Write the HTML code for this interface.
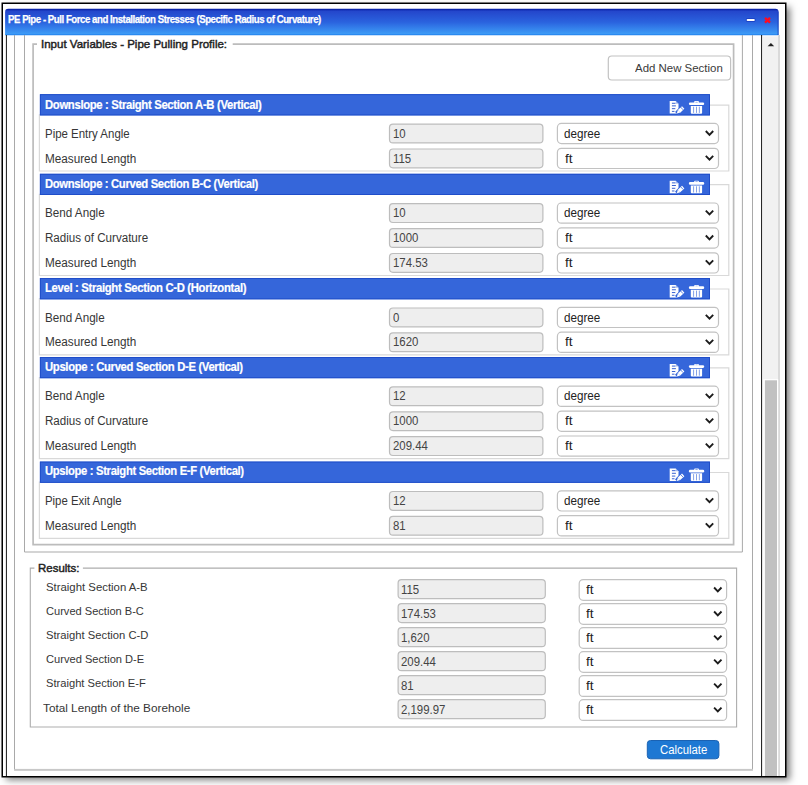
<!DOCTYPE html>
<html><head><meta charset="utf-8"><title>PE Pipe - Pull Force and Installation Stresses</title>
<style>
html,body{margin:0;padding:0;background:#fff;}
body{width:808px;height:785px;position:relative;overflow:hidden;font-family:"Liberation Sans",sans-serif;}
#shadow{position:absolute;left:2px;top:3px;width:784px;height:773px;background:#fff;box-shadow:4px 4px 7px rgba(0,0,0,.5);}
svg{position:absolute;left:0;top:0;}
.t{position:absolute;white-space:nowrap;line-height:20px;height:20px;transform-origin:0 0;font-family:"Liberation Sans",sans-serif;}
</style></head><body>
<div id="shadow"></div>
<svg width="808" height="785" viewBox="0 0 808 785">
<defs><linearGradient id="tg" x1="0" y1="0" x2="0" y2="1"><stop offset="0" stop-color="#0b22a6"/><stop offset="0.035" stop-color="#0d27ac"/><stop offset="0.085" stop-color="#2446cb"/><stop offset="0.5" stop-color="#2a62de"/><stop offset="0.95" stop-color="#3d9bf6"/><stop offset="0.975" stop-color="#2a8af0"/><stop offset="1" stop-color="#2283ee"/></linearGradient><clipPath id="inner"><rect x="3" y="4" width="782" height="772"/></clipPath></defs>
<g clip-path="url(#inner)">
<path d="M5.1,35.15 V12.0 Q5.1,8.8 8.3,8.8 H775.4 Q778.6,8.8 778.6,12.0 V35.15 Z" fill="url(#tg)"/>
<line x1="778.1" y1="11.5" x2="778.1" y2="35" stroke="#1538b8" stroke-width="1" opacity=".75"/>
<line x1="747.6" y1="20" x2="753.8" y2="20" stroke="#1c43c6" stroke-width="3.8" stroke-linecap="round"/>
<line x1="747.6" y1="20" x2="753.8" y2="20" stroke="#fff" stroke-width="2" stroke-linecap="round"/>
<path d="M765,17.9 L770,22.7 M770,17.9 L765,22.7" stroke="#ff0a20" stroke-width="2.3" fill="none"/>
<rect x="5.9" y="35" width="1.0" height="741" fill="#181818"/>
<rect x="761.1" y="35" width="1.0" height="741" fill="#111"/>
<rect x="763" y="36.3" width="15.2" height="739.7" fill="#f1f1f1"/>
<rect x="778.1" y="35" width="1.8" height="741" fill="#d6d6d6"/>
<path d="M767.6,46.3 L774.2,46.3 L770.9,43 Z" fill="#222"/>
<rect x="763.2" y="379.2" width="15" height="396.8" fill="#fff"/>
<rect x="764.9" y="380.3" width="12.1" height="395.7" fill="#c1c1c1"/>
<path d="M14.5,35 L14.5,769.8 L752.5,769.8 L752.5,35" fill="none" stroke="#a9a9a9" stroke-width="1.0"/>
<rect x="14" y="768.9" width="739" height="1.8" fill="#c8c8c8"/>
<path d="M24.5,35 L24.5,552 L742.4,552 L742.4,35" fill="none" stroke="#a9a9a9" stroke-width="1.0"/>
<path d="M37,44.2 L33.1,44.2 L33.1,544.6 L733.6,544.6 L733.6,44.2 L232.7,44.2" fill="none" stroke="#bcbcbc" stroke-width="1.7"/>
<path d="M34.4,568.1 L30.3,568.1 L30.3,727 L736.6,727 L736.6,568.1 L82.9,568.1" fill="none" stroke="#adadad" stroke-width="1.1"/>
<rect x="608.3" y="56.0" width="122.3" height="24" rx="3.5" fill="#fff" stroke="#c2c2c2" stroke-width="1.2"/>
<path d="M709,105.10000000000001 L728.8,105.10000000000001 L728.8,171.0 L39.4,171.0 L39.4,114.2" fill="none" stroke="#d9d9d9" stroke-width="1.2"/>
<rect x="39.9" y="94.20" width="670.1" height="21.2" fill="#3566da"/>
<rect x="40.35" y="94.65" width="669.2" height="20.3" fill="none" stroke="#1d4bc7" stroke-width="0.9"/>
<g transform="translate(669.7,101.10000000000001)"><path d="M0,0 H6.1 L8.8,2.7 V12.5 H0 Z" fill="#fff"/><path d="M6.1,0 V2.7 H8.8 Z" fill="#3566da" opacity=".45"/><g fill="#2f5bd0"><rect x="2.2" y="1.7" width="3.6" height=".95"/><rect x="2.2" y="4.3" width="4.0" height=".95"/><rect x="2.2" y="7.1" width="3.4" height=".95"/><rect x="2.2" y="9.8" width="2.6" height=".95"/></g><path d="M13.7,6.2 L9.0,10.6 L7.2,12.6" stroke="#3566da" stroke-width="5.0" fill="none"/><path d="M13.5,6.4 L9.3,10.3" stroke="#fff" stroke-width="3.5" fill="none"/><path d="M10.6,11.5 L8.1,8.9 L7.2,12.5 Z" fill="#fff"/><path d="M10.8,5.9 L13.4,8.7" stroke="#3566da" stroke-width=".8"/></g>
<g transform="translate(688.9,101.10000000000001)" fill="#fff"><rect x="5.3" y="0" width="4.7" height="2.2" rx=".8"/><rect x="6.5" y=".8" width="2.3" height=".8" fill="#3566da"/><rect x="0" y="1.3" width="15.3" height="2.7" rx="1.3"/><path d="M1.9,4.8 H13.2 V11.6 Q13.2,12.6 12.2,12.6 H2.9 Q1.9,12.6 1.9,11.6 Z"/><g fill="#3566da" opacity=".8"><rect x="4.4" y="5.6" width=".75" height="6.2"/><rect x="7.2" y="5.6" width=".75" height="6.2"/><rect x="10" y="5.6" width=".75" height="6.2"/></g></g>
<rect x="389.5" y="124.10" width="153.40" height="18.80" rx="3.5" fill="#eee" stroke="#bdbdbd" stroke-width="1.2"/>
<rect x="557.4" y="123.40" width="161.10" height="20.20" rx="4" fill="#fff" stroke="#c2c2c2" stroke-width="1.2"/>
<path d="M705.80,131.00 L709.50,134.80 L713.20,131.00" fill="none" stroke="#1c1c1c" stroke-width="1.9"/>
<rect x="389.5" y="149.00" width="153.40" height="18.80" rx="3.5" fill="#eee" stroke="#bdbdbd" stroke-width="1.2"/>
<rect x="557.4" y="148.30" width="161.10" height="20.20" rx="4" fill="#fff" stroke="#c2c2c2" stroke-width="1.2"/>
<path d="M705.80,155.90 L709.50,159.70 L713.20,155.90" fill="none" stroke="#1c1c1c" stroke-width="1.9"/>
<path d="M709,184.70000000000002 L728.8,184.70000000000002 L728.8,275.5 L39.4,275.5 L39.4,193.8" fill="none" stroke="#d9d9d9" stroke-width="1.2"/>
<rect x="39.9" y="173.80" width="670.1" height="21.2" fill="#3566da"/>
<rect x="40.35" y="174.25" width="669.2" height="20.3" fill="none" stroke="#1d4bc7" stroke-width="0.9"/>
<g transform="translate(669.7,180.70000000000002)"><path d="M0,0 H6.1 L8.8,2.7 V12.5 H0 Z" fill="#fff"/><path d="M6.1,0 V2.7 H8.8 Z" fill="#3566da" opacity=".45"/><g fill="#2f5bd0"><rect x="2.2" y="1.7" width="3.6" height=".95"/><rect x="2.2" y="4.3" width="4.0" height=".95"/><rect x="2.2" y="7.1" width="3.4" height=".95"/><rect x="2.2" y="9.8" width="2.6" height=".95"/></g><path d="M13.7,6.2 L9.0,10.6 L7.2,12.6" stroke="#3566da" stroke-width="5.0" fill="none"/><path d="M13.5,6.4 L9.3,10.3" stroke="#fff" stroke-width="3.5" fill="none"/><path d="M10.6,11.5 L8.1,8.9 L7.2,12.5 Z" fill="#fff"/><path d="M10.8,5.9 L13.4,8.7" stroke="#3566da" stroke-width=".8"/></g>
<g transform="translate(688.9,180.70000000000002)" fill="#fff"><rect x="5.3" y="0" width="4.7" height="2.2" rx=".8"/><rect x="6.5" y=".8" width="2.3" height=".8" fill="#3566da"/><rect x="0" y="1.3" width="15.3" height="2.7" rx="1.3"/><path d="M1.9,4.8 H13.2 V11.6 Q13.2,12.6 12.2,12.6 H2.9 Q1.9,12.6 1.9,11.6 Z"/><g fill="#3566da" opacity=".8"><rect x="4.4" y="5.6" width=".75" height="6.2"/><rect x="7.2" y="5.6" width=".75" height="6.2"/><rect x="10" y="5.6" width=".75" height="6.2"/></g></g>
<rect x="389.5" y="203.70" width="153.40" height="18.80" rx="3.5" fill="#eee" stroke="#bdbdbd" stroke-width="1.2"/>
<rect x="557.4" y="203.00" width="161.10" height="20.20" rx="4" fill="#fff" stroke="#c2c2c2" stroke-width="1.2"/>
<path d="M705.80,210.60 L709.50,214.40 L713.20,210.60" fill="none" stroke="#1c1c1c" stroke-width="1.9"/>
<rect x="389.5" y="228.60" width="153.40" height="18.80" rx="3.5" fill="#eee" stroke="#bdbdbd" stroke-width="1.2"/>
<rect x="557.4" y="227.90" width="161.10" height="20.20" rx="4" fill="#fff" stroke="#c2c2c2" stroke-width="1.2"/>
<path d="M705.80,235.50 L709.50,239.30 L713.20,235.50" fill="none" stroke="#1c1c1c" stroke-width="1.9"/>
<rect x="389.5" y="253.50" width="153.40" height="18.80" rx="3.5" fill="#eee" stroke="#bdbdbd" stroke-width="1.2"/>
<rect x="557.4" y="252.80" width="161.10" height="20.20" rx="4" fill="#fff" stroke="#c2c2c2" stroke-width="1.2"/>
<path d="M705.80,260.40 L709.50,264.20 L713.20,260.40" fill="none" stroke="#1c1c1c" stroke-width="1.9"/>
<path d="M709,289.0 L728.8,289.0 L728.8,354.9 L39.4,354.9 L39.4,298.1" fill="none" stroke="#d9d9d9" stroke-width="1.2"/>
<rect x="39.9" y="278.10" width="670.1" height="21.2" fill="#3566da"/>
<rect x="40.35" y="278.55" width="669.2" height="20.3" fill="none" stroke="#1d4bc7" stroke-width="0.9"/>
<g transform="translate(669.7,285.0)"><path d="M0,0 H6.1 L8.8,2.7 V12.5 H0 Z" fill="#fff"/><path d="M6.1,0 V2.7 H8.8 Z" fill="#3566da" opacity=".45"/><g fill="#2f5bd0"><rect x="2.2" y="1.7" width="3.6" height=".95"/><rect x="2.2" y="4.3" width="4.0" height=".95"/><rect x="2.2" y="7.1" width="3.4" height=".95"/><rect x="2.2" y="9.8" width="2.6" height=".95"/></g><path d="M13.7,6.2 L9.0,10.6 L7.2,12.6" stroke="#3566da" stroke-width="5.0" fill="none"/><path d="M13.5,6.4 L9.3,10.3" stroke="#fff" stroke-width="3.5" fill="none"/><path d="M10.6,11.5 L8.1,8.9 L7.2,12.5 Z" fill="#fff"/><path d="M10.8,5.9 L13.4,8.7" stroke="#3566da" stroke-width=".8"/></g>
<g transform="translate(688.9,285.0)" fill="#fff"><rect x="5.3" y="0" width="4.7" height="2.2" rx=".8"/><rect x="6.5" y=".8" width="2.3" height=".8" fill="#3566da"/><rect x="0" y="1.3" width="15.3" height="2.7" rx="1.3"/><path d="M1.9,4.8 H13.2 V11.6 Q13.2,12.6 12.2,12.6 H2.9 Q1.9,12.6 1.9,11.6 Z"/><g fill="#3566da" opacity=".8"><rect x="4.4" y="5.6" width=".75" height="6.2"/><rect x="7.2" y="5.6" width=".75" height="6.2"/><rect x="10" y="5.6" width=".75" height="6.2"/></g></g>
<rect x="389.5" y="308.00" width="153.40" height="18.80" rx="3.5" fill="#eee" stroke="#bdbdbd" stroke-width="1.2"/>
<rect x="557.4" y="307.30" width="161.10" height="20.20" rx="4" fill="#fff" stroke="#c2c2c2" stroke-width="1.2"/>
<path d="M705.80,314.90 L709.50,318.70 L713.20,314.90" fill="none" stroke="#1c1c1c" stroke-width="1.9"/>
<rect x="389.5" y="332.90" width="153.40" height="18.80" rx="3.5" fill="#eee" stroke="#bdbdbd" stroke-width="1.2"/>
<rect x="557.4" y="332.20" width="161.10" height="20.20" rx="4" fill="#fff" stroke="#c2c2c2" stroke-width="1.2"/>
<path d="M705.80,339.80 L709.50,343.60 L713.20,339.80" fill="none" stroke="#1c1c1c" stroke-width="1.9"/>
<path d="M709,367.9 L728.8,367.9 L728.8,458.7 L39.4,458.7 L39.4,377.0" fill="none" stroke="#d9d9d9" stroke-width="1.2"/>
<rect x="39.9" y="357.00" width="670.1" height="21.2" fill="#3566da"/>
<rect x="40.35" y="357.45" width="669.2" height="20.3" fill="none" stroke="#1d4bc7" stroke-width="0.9"/>
<g transform="translate(669.7,363.9)"><path d="M0,0 H6.1 L8.8,2.7 V12.5 H0 Z" fill="#fff"/><path d="M6.1,0 V2.7 H8.8 Z" fill="#3566da" opacity=".45"/><g fill="#2f5bd0"><rect x="2.2" y="1.7" width="3.6" height=".95"/><rect x="2.2" y="4.3" width="4.0" height=".95"/><rect x="2.2" y="7.1" width="3.4" height=".95"/><rect x="2.2" y="9.8" width="2.6" height=".95"/></g><path d="M13.7,6.2 L9.0,10.6 L7.2,12.6" stroke="#3566da" stroke-width="5.0" fill="none"/><path d="M13.5,6.4 L9.3,10.3" stroke="#fff" stroke-width="3.5" fill="none"/><path d="M10.6,11.5 L8.1,8.9 L7.2,12.5 Z" fill="#fff"/><path d="M10.8,5.9 L13.4,8.7" stroke="#3566da" stroke-width=".8"/></g>
<g transform="translate(688.9,363.9)" fill="#fff"><rect x="5.3" y="0" width="4.7" height="2.2" rx=".8"/><rect x="6.5" y=".8" width="2.3" height=".8" fill="#3566da"/><rect x="0" y="1.3" width="15.3" height="2.7" rx="1.3"/><path d="M1.9,4.8 H13.2 V11.6 Q13.2,12.6 12.2,12.6 H2.9 Q1.9,12.6 1.9,11.6 Z"/><g fill="#3566da" opacity=".8"><rect x="4.4" y="5.6" width=".75" height="6.2"/><rect x="7.2" y="5.6" width=".75" height="6.2"/><rect x="10" y="5.6" width=".75" height="6.2"/></g></g>
<rect x="389.5" y="386.90" width="153.40" height="18.80" rx="3.5" fill="#eee" stroke="#bdbdbd" stroke-width="1.2"/>
<rect x="557.4" y="386.20" width="161.10" height="20.20" rx="4" fill="#fff" stroke="#c2c2c2" stroke-width="1.2"/>
<path d="M705.80,393.80 L709.50,397.60 L713.20,393.80" fill="none" stroke="#1c1c1c" stroke-width="1.9"/>
<rect x="389.5" y="411.80" width="153.40" height="18.80" rx="3.5" fill="#eee" stroke="#bdbdbd" stroke-width="1.2"/>
<rect x="557.4" y="411.10" width="161.10" height="20.20" rx="4" fill="#fff" stroke="#c2c2c2" stroke-width="1.2"/>
<path d="M705.80,418.70 L709.50,422.50 L713.20,418.70" fill="none" stroke="#1c1c1c" stroke-width="1.9"/>
<rect x="389.5" y="436.70" width="153.40" height="18.80" rx="3.5" fill="#eee" stroke="#bdbdbd" stroke-width="1.2"/>
<rect x="557.4" y="436.00" width="161.10" height="20.20" rx="4" fill="#fff" stroke="#c2c2c2" stroke-width="1.2"/>
<path d="M705.80,443.60 L709.50,447.40 L713.20,443.60" fill="none" stroke="#1c1c1c" stroke-width="1.9"/>
<path d="M709,472.5 L728.8,472.5 L728.8,538.4 L39.4,538.4 L39.4,481.6" fill="none" stroke="#d9d9d9" stroke-width="1.2"/>
<rect x="39.9" y="461.60" width="670.1" height="21.2" fill="#3566da"/>
<rect x="40.35" y="462.05" width="669.2" height="20.3" fill="none" stroke="#1d4bc7" stroke-width="0.9"/>
<g transform="translate(669.7,468.5)"><path d="M0,0 H6.1 L8.8,2.7 V12.5 H0 Z" fill="#fff"/><path d="M6.1,0 V2.7 H8.8 Z" fill="#3566da" opacity=".45"/><g fill="#2f5bd0"><rect x="2.2" y="1.7" width="3.6" height=".95"/><rect x="2.2" y="4.3" width="4.0" height=".95"/><rect x="2.2" y="7.1" width="3.4" height=".95"/><rect x="2.2" y="9.8" width="2.6" height=".95"/></g><path d="M13.7,6.2 L9.0,10.6 L7.2,12.6" stroke="#3566da" stroke-width="5.0" fill="none"/><path d="M13.5,6.4 L9.3,10.3" stroke="#fff" stroke-width="3.5" fill="none"/><path d="M10.6,11.5 L8.1,8.9 L7.2,12.5 Z" fill="#fff"/><path d="M10.8,5.9 L13.4,8.7" stroke="#3566da" stroke-width=".8"/></g>
<g transform="translate(688.9,468.5)" fill="#fff"><rect x="5.3" y="0" width="4.7" height="2.2" rx=".8"/><rect x="6.5" y=".8" width="2.3" height=".8" fill="#3566da"/><rect x="0" y="1.3" width="15.3" height="2.7" rx="1.3"/><path d="M1.9,4.8 H13.2 V11.6 Q13.2,12.6 12.2,12.6 H2.9 Q1.9,12.6 1.9,11.6 Z"/><g fill="#3566da" opacity=".8"><rect x="4.4" y="5.6" width=".75" height="6.2"/><rect x="7.2" y="5.6" width=".75" height="6.2"/><rect x="10" y="5.6" width=".75" height="6.2"/></g></g>
<rect x="389.5" y="491.50" width="153.40" height="18.80" rx="3.5" fill="#eee" stroke="#bdbdbd" stroke-width="1.2"/>
<rect x="557.4" y="490.80" width="161.10" height="20.20" rx="4" fill="#fff" stroke="#c2c2c2" stroke-width="1.2"/>
<path d="M705.80,498.40 L709.50,502.20 L713.20,498.40" fill="none" stroke="#1c1c1c" stroke-width="1.9"/>
<rect x="389.5" y="516.40" width="153.40" height="18.80" rx="3.5" fill="#eee" stroke="#bdbdbd" stroke-width="1.2"/>
<rect x="557.4" y="515.70" width="161.10" height="20.20" rx="4" fill="#fff" stroke="#c2c2c2" stroke-width="1.2"/>
<path d="M705.80,523.30 L709.50,527.10 L713.20,523.30" fill="none" stroke="#1c1c1c" stroke-width="1.9"/>
<rect x="398.1" y="579.60" width="147.20" height="19.00" rx="3.5" fill="#eee" stroke="#bdbdbd" stroke-width="1.2"/>
<rect x="579.2" y="579.60" width="147.40" height="20.70" rx="4" fill="#fff" stroke="#c2c2c2" stroke-width="1.2"/>
<path d="M714.10,587.50 L717.80,591.30 L721.50,587.50" fill="none" stroke="#1c1c1c" stroke-width="1.9"/>
<rect x="398.1" y="603.62" width="147.20" height="19.00" rx="3.5" fill="#eee" stroke="#bdbdbd" stroke-width="1.2"/>
<rect x="579.2" y="603.62" width="147.40" height="20.70" rx="4" fill="#fff" stroke="#c2c2c2" stroke-width="1.2"/>
<path d="M714.10,611.52 L717.80,615.32 L721.50,611.52" fill="none" stroke="#1c1c1c" stroke-width="1.9"/>
<rect x="398.1" y="627.64" width="147.20" height="19.00" rx="3.5" fill="#eee" stroke="#bdbdbd" stroke-width="1.2"/>
<rect x="579.2" y="627.64" width="147.40" height="20.70" rx="4" fill="#fff" stroke="#c2c2c2" stroke-width="1.2"/>
<path d="M714.10,635.54 L717.80,639.34 L721.50,635.54" fill="none" stroke="#1c1c1c" stroke-width="1.9"/>
<rect x="398.1" y="651.66" width="147.20" height="19.00" rx="3.5" fill="#eee" stroke="#bdbdbd" stroke-width="1.2"/>
<rect x="579.2" y="651.66" width="147.40" height="20.70" rx="4" fill="#fff" stroke="#c2c2c2" stroke-width="1.2"/>
<path d="M714.10,659.56 L717.80,663.36 L721.50,659.56" fill="none" stroke="#1c1c1c" stroke-width="1.9"/>
<rect x="398.1" y="675.68" width="147.20" height="19.00" rx="3.5" fill="#eee" stroke="#bdbdbd" stroke-width="1.2"/>
<rect x="579.2" y="675.68" width="147.40" height="20.70" rx="4" fill="#fff" stroke="#c2c2c2" stroke-width="1.2"/>
<path d="M714.10,683.58 L717.80,687.38 L721.50,683.58" fill="none" stroke="#1c1c1c" stroke-width="1.9"/>
<rect x="398.1" y="699.70" width="147.20" height="19.00" rx="3.5" fill="#eee" stroke="#bdbdbd" stroke-width="1.2"/>
<rect x="579.2" y="699.70" width="147.40" height="20.70" rx="4" fill="#fff" stroke="#c2c2c2" stroke-width="1.2"/>
<path d="M714.10,707.60 L717.80,711.40 L721.50,707.60" fill="none" stroke="#1c1c1c" stroke-width="1.9"/>
<rect x="647.3" y="740.5" width="71.6" height="18.3" rx="3.2" fill="#1e78d3" stroke="#1a62b3" stroke-width="1"/>
</g>
<path fill-rule="evenodd" fill="#000" d="M1.5,2.5 H786.5 V777.5 H1.5 Z M3,4 V776 H785 V4 Z"/>
</svg>
<div id="text">
<span class="t" style="left:7.97px;top:9px;font-size:10.7px;font-weight:bold;color:#fff;transform:scaleX(0.9001);-webkit-text-stroke:0.25px #fff;letter-spacing:-0.5px;">PE Pipe - Pull Force and Installation Stresses (Specific Radius of Curvature)</span>
<span class="t" style="left:40.56px;top:34px;font-size:11.6px;color:#222;transform:scaleX(0.9932);-webkit-text-stroke:0.45px #222;">Input Variables - Pipe Pulling Profile:</span>
<span class="t" style="left:37.58px;top:558px;font-size:11.6px;color:#222;transform:scaleX(0.9884);-webkit-text-stroke:0.45px #222;">Results:</span>
<span class="t" style="left:634.60px;top:58px;font-size:11.5px;color:#3a3a3a;transform:scaleX(0.9953);">Add New Section</span>
<span class="t" style="left:45.07px;top:95px;font-size:12px;font-weight:bold;color:#fff;transform:scaleX(0.9413);-webkit-text-stroke:0.2px #fff;letter-spacing:-0.35px;">Downslope : Straight Section A-B (Vertical)</span>
<span class="t" style="left:44.78px;top:124px;font-size:12px;color:#363636;transform:scaleX(0.9542);">Pipe Entry Angle</span>
<span class="t" style="left:392.94px;top:124px;font-size:12px;color:#444;transform:scaleX(0.9500);">10</span>
<span class="t" style="left:564.23px;top:124px;font-size:12px;color:#222;transform:scaleX(0.9720);">degree</span>
<span class="t" style="left:44.76px;top:149px;font-size:12px;color:#363636;transform:scaleX(0.9773);">Measured Length</span>
<span class="t" style="left:392.94px;top:149px;font-size:12px;color:#444;transform:scaleX(0.9500);">115</span>
<span class="t" style="left:564.56px;top:149px;font-size:12px;color:#222;transform:scaleX(1.1420);">ft</span>
<span class="t" style="left:45.07px;top:174px;font-size:12px;font-weight:bold;color:#fff;transform:scaleX(0.9376);-webkit-text-stroke:0.2px #fff;letter-spacing:-0.35px;">Downslope : Curved Section B-C (Vertical)</span>
<span class="t" style="left:44.77px;top:203px;font-size:12px;color:#363636;transform:scaleX(0.9726);">Bend Angle</span>
<span class="t" style="left:392.94px;top:203px;font-size:12px;color:#444;transform:scaleX(0.9500);">10</span>
<span class="t" style="left:564.23px;top:203px;font-size:12px;color:#222;transform:scaleX(0.9720);">degree</span>
<span class="t" style="left:44.77px;top:228px;font-size:12px;color:#363636;transform:scaleX(0.9664);">Radius of Curvature</span>
<span class="t" style="left:392.94px;top:228px;font-size:12px;color:#444;transform:scaleX(0.9500);">1000</span>
<span class="t" style="left:564.56px;top:228px;font-size:12px;color:#222;transform:scaleX(1.1420);">ft</span>
<span class="t" style="left:44.76px;top:253px;font-size:12px;color:#363636;transform:scaleX(0.9773);">Measured Length</span>
<span class="t" style="left:392.94px;top:253px;font-size:12px;color:#444;transform:scaleX(0.9500);">174.53</span>
<span class="t" style="left:564.56px;top:253px;font-size:12px;color:#222;transform:scaleX(1.1420);">ft</span>
<span class="t" style="left:45.07px;top:278px;font-size:12px;font-weight:bold;color:#fff;transform:scaleX(0.9413);-webkit-text-stroke:0.2px #fff;letter-spacing:-0.35px;">Level : Straight Section C-D (Horizontal)</span>
<span class="t" style="left:44.77px;top:308px;font-size:12px;color:#363636;transform:scaleX(0.9726);">Bend Angle</span>
<span class="t" style="left:393.40px;top:308px;font-size:12px;color:#444;transform:scaleX(0.9500);">0</span>
<span class="t" style="left:564.23px;top:308px;font-size:12px;color:#222;transform:scaleX(0.9720);">degree</span>
<span class="t" style="left:44.76px;top:332px;font-size:12px;color:#363636;transform:scaleX(0.9773);">Measured Length</span>
<span class="t" style="left:392.94px;top:332px;font-size:12px;color:#444;transform:scaleX(0.9500);">1620</span>
<span class="t" style="left:564.56px;top:332px;font-size:12px;color:#222;transform:scaleX(1.1420);">ft</span>
<span class="t" style="left:45.12px;top:357px;font-size:12px;font-weight:bold;color:#fff;transform:scaleX(0.9399);-webkit-text-stroke:0.2px #fff;letter-spacing:-0.35px;">Upslope : Curved Section D-E (Vertical)</span>
<span class="t" style="left:44.77px;top:386px;font-size:12px;color:#363636;transform:scaleX(0.9726);">Bend Angle</span>
<span class="t" style="left:392.94px;top:386px;font-size:12px;color:#444;transform:scaleX(0.9500);">12</span>
<span class="t" style="left:564.23px;top:386px;font-size:12px;color:#222;transform:scaleX(0.9720);">degree</span>
<span class="t" style="left:44.77px;top:411px;font-size:12px;color:#363636;transform:scaleX(0.9664);">Radius of Curvature</span>
<span class="t" style="left:392.94px;top:411px;font-size:12px;color:#444;transform:scaleX(0.9500);">1000</span>
<span class="t" style="left:564.56px;top:411px;font-size:12px;color:#222;transform:scaleX(1.1420);">ft</span>
<span class="t" style="left:44.76px;top:436px;font-size:12px;color:#363636;transform:scaleX(0.9773);">Measured Length</span>
<span class="t" style="left:393.23px;top:436px;font-size:12px;color:#444;transform:scaleX(0.9500);">209.44</span>
<span class="t" style="left:564.56px;top:436px;font-size:12px;color:#222;transform:scaleX(1.1420);">ft</span>
<span class="t" style="left:45.13px;top:461px;font-size:12px;font-weight:bold;color:#fff;transform:scaleX(0.9361);-webkit-text-stroke:0.2px #fff;letter-spacing:-0.35px;">Upslope : Straight Section E-F (Vertical)</span>
<span class="t" style="left:44.79px;top:491px;font-size:12px;color:#363636;transform:scaleX(0.9488);">Pipe Exit Angle</span>
<span class="t" style="left:392.94px;top:491px;font-size:12px;color:#444;transform:scaleX(0.9500);">12</span>
<span class="t" style="left:564.23px;top:491px;font-size:12px;color:#222;transform:scaleX(0.9720);">degree</span>
<span class="t" style="left:44.76px;top:516px;font-size:12px;color:#363636;transform:scaleX(0.9773);">Measured Length</span>
<span class="t" style="left:393.34px;top:516px;font-size:12px;color:#444;transform:scaleX(0.9500);">81</span>
<span class="t" style="left:564.56px;top:516px;font-size:12px;color:#222;transform:scaleX(1.1420);">ft</span>
<span class="t" style="left:45.59px;top:577px;font-size:11.5px;color:#363636;transform:scaleX(0.9879);">Straight Section A-B</span>
<span class="t" style="left:400.84px;top:580px;font-size:12px;color:#444;transform:scaleX(0.9500);">115</span>
<span class="t" style="left:586.46px;top:580px;font-size:12px;color:#222;transform:scaleX(1.1420);">ft</span>
<span class="t" style="left:45.55px;top:601px;font-size:11.5px;color:#363636;transform:scaleX(0.9630);">Curved Section B-C</span>
<span class="t" style="left:400.84px;top:604px;font-size:12px;color:#444;transform:scaleX(0.9500);">174.53</span>
<span class="t" style="left:586.46px;top:604px;font-size:12px;color:#222;transform:scaleX(1.1420);">ft</span>
<span class="t" style="left:45.59px;top:625px;font-size:11.5px;color:#363636;transform:scaleX(0.9770);">Straight Section C-D</span>
<span class="t" style="left:400.84px;top:628px;font-size:12px;color:#444;transform:scaleX(0.9500);">1,620</span>
<span class="t" style="left:586.46px;top:628px;font-size:12px;color:#222;transform:scaleX(1.1420);">ft</span>
<span class="t" style="left:45.54px;top:649px;font-size:11.5px;color:#363636;transform:scaleX(0.9665);">Curved Section D-E</span>
<span class="t" style="left:401.13px;top:652px;font-size:12px;color:#444;transform:scaleX(0.9500);">209.44</span>
<span class="t" style="left:586.46px;top:652px;font-size:12px;color:#222;transform:scaleX(1.1420);">ft</span>
<span class="t" style="left:45.60px;top:673px;font-size:11.5px;color:#363636;transform:scaleX(0.9701);">Straight Section E-F</span>
<span class="t" style="left:401.24px;top:676px;font-size:12px;color:#444;transform:scaleX(0.9500);">81</span>
<span class="t" style="left:586.46px;top:676px;font-size:12px;color:#222;transform:scaleX(1.1420);">ft</span>
<span class="t" style="left:42.86px;top:698px;font-size:11.5px;color:#363636;transform:scaleX(1.0232);">Total Length of the Borehole</span>
<span class="t" style="left:401.13px;top:700px;font-size:12px;color:#444;transform:scaleX(0.9500);">2,199.97</span>
<span class="t" style="left:586.46px;top:700px;font-size:12px;color:#222;transform:scaleX(1.1420);">ft</span>
<span class="t" style="left:659.73px;top:740px;font-size:12px;color:#fff;transform:scaleX(0.9457);">Calculate</span>
</div>
</body></html>
